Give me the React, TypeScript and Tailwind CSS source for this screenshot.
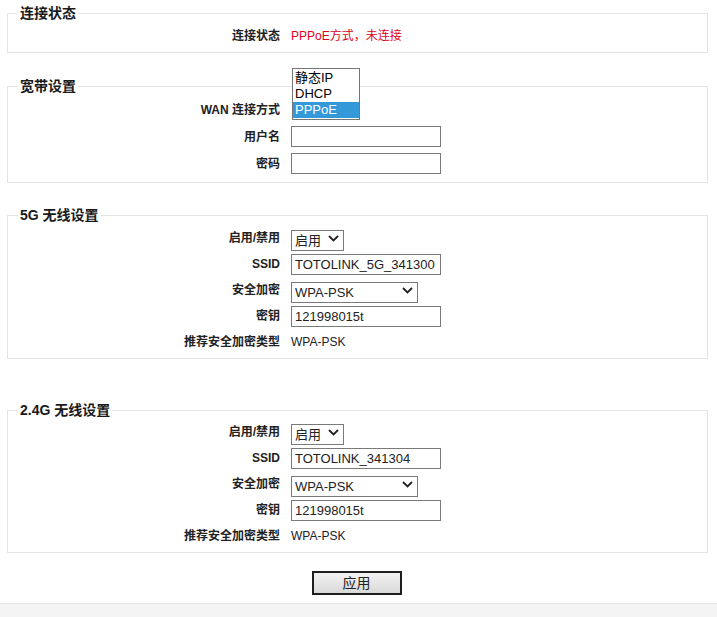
import React from "react";

const font = "font-['Liberation_Sans','Noto_Sans_CJK_SC',sans-serif]";

function Chevron() {
  return (
    <svg width="11" height="7" viewBox="0 0 11 7" className="pointer-events-none absolute right-[5px] top-[7px]">
      <path d="M1 1 L5.5 5.5 L10 1" fill="none" stroke="#222" strokeWidth="1.8" />
    </svg>
  );
}

function Select({ value, width }: { value: string; width: string }) {
  return (
    <div className={`relative h-[21px] ${width}`}>
      <select
        defaultValue={value}
        className={`h-full w-full appearance-none border border-[#7a7a7a] bg-white pl-[3px] text-[13px] leading-[19px] text-[#222] outline-none ${font}`}
      >
        <option>{value}</option>
      </select>
      <Chevron />
    </div>
  );
}

function TextInput({ value = "" }: { value?: string }) {
  return (
    <input
      defaultValue={value}
      className={`h-[21px] w-[150px] border border-[#7a7a7a] bg-white px-[3px] text-[13px] text-[#222] outline-none ${font}`}
    />
  );
}

function Row({ label, h = "h-[26px]", children }: { label: string; h?: string; children: React.ReactNode }) {
  return (
    <div className={`grid grid-cols-[272px_1fr] items-center gap-x-[11px] ${h}`}>
      <div className="text-right text-[12px] font-bold text-[#222]">{label}</div>
      <div className="flex items-center">{children}</div>
    </div>
  );
}

function Section({ title, className, children }: { title: string; className: string; children: React.ReactNode }) {
  return (
    <fieldset className={`border border-[#e4e4e4] ${className}`}>
      <legend className="ml-[10px] px-[2px] text-[14px] font-bold leading-[14px] text-[#1a1a1a]">{title}</legend>
      {children}
    </fieldset>
  );
}

function Wireless({ title, ssid, className }: { title: string; ssid: string; className: string }) {
  return (
    <Section title={title} className={className}>
      <Row label="启用/禁用">
        <Select value="启用" width="w-[53px]" />
      </Row>
      <Row label="SSID">
        <TextInput value={ssid} />
      </Row>
      <Row label="安全加密">
        <Select value="WPA-PSK" width="w-[127px]" />
      </Row>
      <Row label="密钥">
        <TextInput value="121998015t" />
      </Row>
      <Row label="推荐安全加密类型">
        <span className="text-[12px] text-[#222]">WPA-PSK</span>
      </Row>
    </Section>
  );
}

export default function App() {
  return (
    <div className={`flex h-[617px] w-[717px] flex-col overflow-hidden bg-white ${font}`}>
      <div className="pl-[7px] pr-[9px] pt-[6px]">
        <Section title="连接状态" className="pb-[3px] pt-[3px]">
          <Row label="连接状态">
            <span className="text-[12px] text-[#e0001b]">PPPoE方式，未连接</span>
          </Row>
        </Section>

        <Section title="宽带设置" className="mt-[26px] pb-[5px] pt-[3px]">
          <div className="relative">
            <Row label="WAN 连接方式" h="h-[27px]">
              <div className="h-[21px] w-[68px]" />
            </Row>
            {/* open dropdown list */}
            <div className="absolute left-[284px] top-[-28px] w-[68px] border border-[#767676] bg-white py-[1px] text-[13px] leading-[16px] text-black">
              <div className="pl-[2px]">静态IP</div>
              <div className="pl-[2px]">DHCP</div>
              <div className="bg-[#3399d9] pl-[2px] text-white">PPPoE</div>
            </div>
          </div>
          <Row label="用户名" h="h-[27px]">
            <TextInput />
          </Row>
          <Row label="密码" h="h-[27px]">
            <TextInput />
          </Row>
        </Section>

        <Wireless title="5G 无线设置" ssid="TOTOLINK_5G_341300" className="mt-[25px] pb-[3px] pt-[3px]" />
        <Wireless title="2.4G 无线设置" ssid="TOTOLINK_341304" className="mt-[44px] pb-[3px] pt-[2px]" />
      </div>

      <div className="mt-[18px] flex justify-center pl-[-2px]">
        <button className="mr-[4px] h-[24px] w-[90px] border-2 border-[#1e1e1e] bg-gradient-to-b from-[#f2f2f2] to-[#d9d9d9] text-[14px] text-[#222]">
          应用
        </button>
      </div>

      <div className="mt-[8px] flex-1 border-t border-[#e2e2e2] bg-[#f4f4f4]" />
    </div>
  );
}
